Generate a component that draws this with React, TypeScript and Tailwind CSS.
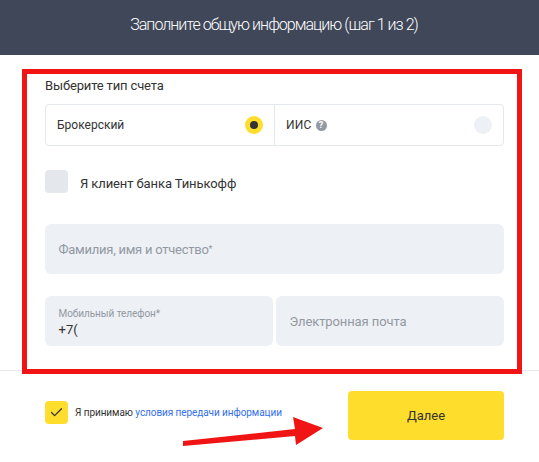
import { Check } from 'lucide-react';

const App = () => {
  return (
    <div className="relative w-[539px] h-[462px] overflow-hidden bg-white font-['Roboto',sans-serif]">
      {/* Header */}
      <header className="h-[55px] pb-[5px] pl-[9px] bg-[#3f4759] flex items-center justify-center">
        <h1 className="text-[16px] font-light tracking-[-0.95px] text-white">Заполните общую информацию (шаг 1 из 2)</h1>
      </header>

      <div className="pl-[45px] pr-[35px]">
        <p className="mt-[22px] h-[18px] text-[13px] leading-[18px] tracking-[-0.15px] text-[#333333]">Выберите тип счета</p>

        {/* Account type */}
        <div className="mt-[9px] h-[42px] flex rounded border border-[#e4e7ec]">
          <div className="w-[229px] border-r border-[#e4e7ec] flex items-center justify-between pl-[11px] pr-[11px]">
            <span className="text-[12px] text-[#333333]">Брокерский</span>
            <span className="w-[18px] h-[18px] rounded-full bg-[#ffdd2d] flex items-center justify-center">
              <span className="w-2 h-2 rounded-full bg-[#333333]"></span>
            </span>
          </div>
          <div className="flex-1 flex items-center justify-between pl-[11px] pr-[11px]">
            <span className="flex items-center gap-[4px] text-[12px] tracking-[0.2px] text-[#333333]">
              ИИС
              <span className="w-[11px] h-[11px] rounded-full bg-[#9299a2] flex items-center justify-center text-[9px] font-bold leading-none text-white">?</span>
            </span>
            <span className="w-[18px] h-[18px] rounded-full bg-[#edf0f5]"></span>
          </div>
        </div>

        {/* Bank client */}
        <div className="mt-[24px] flex items-center gap-[12px]">
          <span className="w-[23px] h-[23px] rounded bg-[#e4e7ec]"></span>
          <span className="pt-[4px] text-[13px] tracking-[-0.1px] text-[#333333]">Я клиент банка Тинькофф</span>
        </div>

        {/* Fields */}
        <div className="mt-[30px] h-[50px] rounded-md bg-[#edf0f5] flex items-center px-[13.5px] pt-[3px] text-[13px] tracking-[-0.25px] text-[#9299a2]">
          Фамилия, имя и отчество<span className="self-start mt-[18px] text-[9px] leading-none">*</span>
        </div>

        <div className="mt-[22px] flex gap-[3px]">
          <div className="w-[228px] h-[50px] rounded-md bg-[#edf0f5] px-[13.5px] pt-[12px]">
            <p className="text-[10px] leading-[12px] tracking-[-0.05px] text-[#9299a2]">Мобильный телефон*</p>
            <p className="mt-[1px] text-[13px] leading-[17px] text-[#333333]">+7(</p>
          </div>
          <div className="flex-1 h-[50px] rounded-md bg-[#edf0f5] flex items-center px-[13.5px] pt-[2px] text-[13px] tracking-[-0.1px] text-[#9299a2]">
            Электронная почта
          </div>
        </div>
      </div>

      {/* Footer */}
      <div className="mt-[24px] border-t border-[#e4e7ec] pl-[45px] pr-[35px] pt-[20px] flex items-start">
        <div className="mt-[10px] flex items-center gap-[7px]">
          <span className="w-[23px] h-[23px] rounded bg-[#ffdd2d] flex items-center justify-center">
            <Check className="w-[15px] h-[15px] text-[#333333]" strokeWidth={2} />
          </span>
          <span className="text-[10px] tracking-[-0.07px] text-[#333333]">
            Я принимаю <span className="text-[#336fee]">условия передачи информации</span>
          </span>
        </div>
        <button className="ml-auto w-[156px] h-[49px] pt-[1px] rounded bg-[#ffdd2d] text-[13px] text-[#333333]">Далее</button>
      </div>

      {/* Red annotation frame */}
      <div className="absolute left-[22px] top-[69px] w-[500px] h-[305px] border-[5px] border-[#f01414]"></div>

      {/* Red annotation arrow */}
      <svg className="absolute left-0 top-0" width="539" height="462" viewBox="0 0 539 462">
        <polygon
          points="183,441 295,429 293,417 323,428 296,445 295,436 183,446"
          fill="#f01414"
        />
      </svg>
    </div>
  );
};

export default App;
